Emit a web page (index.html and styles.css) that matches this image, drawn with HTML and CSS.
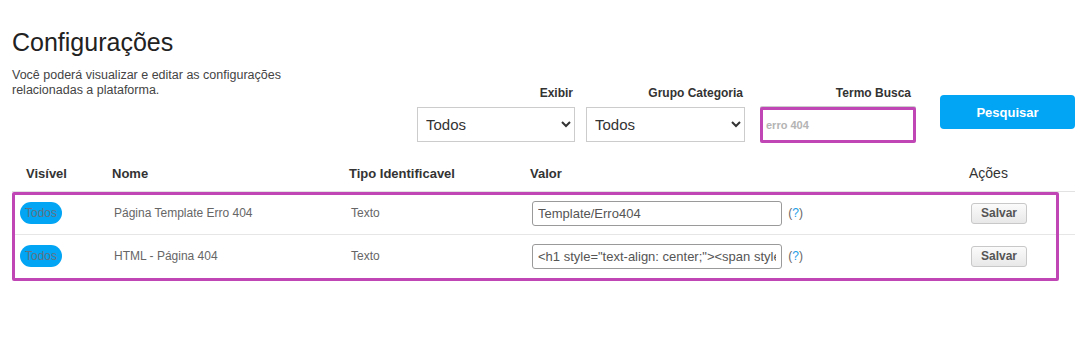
FILE: index.html
```html
<!DOCTYPE html>
<html lang="pt-BR">
<head>
    <meta charset="UTF-8">
    <link rel="stylesheet" href="styles.css">
</head>
<body>
    <div class="page">
        <h1>Configurações</h1>

        <div class="toolbar">
            <p class="desc">Você poderá visualizar e editar as configurações relacionadas a plataforma.</p>

            <div class="filters">
                <div class="field field-exibir">
                    <label>Exibir</label>
                    <select>
                        <option>Todos</option>
                    </select>
                </div>
                <div class="field field-grupo">
                    <label>Grupo Categoria</label>
                    <select>
                        <option>Todos</option>
                    </select>
                </div>
                <div class="field field-termo">
                    <label>Termo Busca</label>
                    <input type="text" class="search" value="erro 404">
                </div>
                <button type="button" class="btn-search">Pesquisar</button>
            </div>
        </div>

        <div class="grid">
            <table>
                <colgroup>
                    <col class="c-vis">
                    <col class="c-nome">
                    <col class="c-tipo">
                    <col class="c-valor">
                    <col class="c-acoes">
                </colgroup>
                <thead>
                    <tr>
                        <th class="th-vis">Visível</th>
                        <th>Nome</th>
                        <th>Tipo Identificavel</th>
                        <th>Valor</th>
                        <th class="th-acoes">Ações</th>
                    </tr>
                </thead>
                <tbody>
                    <tr>
                        <td><span class="badge">Todos</span></td>
                        <td>Página Template Erro 404</td>
                        <td>Texto</td>
                        <td>
                            <input type="text" class="value" value="Template/Erro404">
                            <span class="help">(<b>?</b>)</span>
                        </td>
                        <td><button type="button" class="btn-save">Salvar</button></td>
                    </tr>
                    <tr>
                        <td><span class="badge">Todos</span></td>
                        <td>HTML - Página 404</td>
                        <td>Texto</td>
                        <td>
                            <input type="text" class="value" value='<h1 style="text-align: center;"><span style="color: #333;">Página não encontrada</span></h1>'>
                            <span class="help">(<b>?</b>)</span>
                        </td>
                        <td><button type="button" class="btn-save">Salvar</button></td>
                    </tr>
                </tbody>
            </table>

            <!-- marcação em destaque sobre as linhas -->
            <div class="highlight"></div>
        </div>
    </div>
</body>
</html>
```

FILE: styles.css
```css
body {
    margin: 0;
    font-family: "Liberation Sans", Arial, sans-serif;
    background: #fff;
    color: #333;
}

.page {
    padding: 28px 10px 60px 12px;
}

h1 {
    margin: 0;
    font-size: 25px;
    line-height: 28px;
    font-weight: normal;
    color: #222;
}

.toolbar {
    display: flex;
    justify-content: space-between;
    align-items: flex-start;
    margin-top: 12px;
}

.desc {
    width: 290px;
    margin: 0;
    font-size: 12.5px;
    line-height: 15px;
    color: #444;
}

.filters {
    display: flex;
    align-items: flex-start;
    margin-top: 18px;
}

.field {
    display: flex;
    flex-direction: column;
}

.field label {
    text-align: right;
    padding-right: 2px;
    margin-bottom: 7px;
    font-size: 12px;
    line-height: 14px;
    font-weight: bold;
    color: #333;
}

.field-exibir {
    width: 158px;
}

.field-grupo {
    width: 159px;
    margin-left: 11px;
}

.field-termo {
    width: 156px;
    margin-left: 15px;
}

.field-termo label {
    padding-right: 5px;
}

select {
    height: 35px;
    width: 100%;
    border: 1px solid #ccc;
    border-radius: 0;
    background-color: #fff;
    padding: 0 4px;
    font-family: "Liberation Sans", Arial, sans-serif;
    font-size: 15px;
    color: #333;
}

.search {
    box-sizing: border-box;
    width: 156px;
    height: 36px;
    border: 3px solid #c046b6;
    border-radius: 2px;
    box-shadow: 0 -1px 0 #ccc;
    padding: 0 3px;
    font-family: "Liberation Sans", Arial, sans-serif;
    font-size: 11px;
    font-weight: bold;
    color: #b4b4b4;
    outline: none;
}

.btn-search {
    width: 135px;
    height: 34px;
    margin-top: 9px;
    margin-left: 24px;
    border: none;
    border-radius: 4px;
    background: #02a4f4;
    color: #fff;
    font-family: "Liberation Sans", Arial, sans-serif;
    font-size: 13px;
    font-weight: bold;
}

.grid {
    position: relative;
    margin-top: 12px;
}

table {
    width: 100%;
    table-layout: fixed;
    border-collapse: collapse;
}

.c-vis { width: 94px; }
.c-nome { width: 237px; }
.c-tipo { width: 181px; }
.c-valor { width: 439px; }
.c-acoes { width: 112px; }

th {
    height: 36px;
    padding: 0 0 0 6px;
    text-align: left;
    vertical-align: middle;
    font-size: 13px;
    font-weight: bold;
    color: #333;
    border-bottom: 1px solid #e2e2e2;
}

th.th-vis {
    padding-left: 14px;
}

th.th-acoes {
    font-weight: normal;
    font-size: 14px;
}

td {
    height: 42px;
    padding: 0 0 0 8px;
    vertical-align: middle;
    font-size: 12px;
    color: #666;
    white-space: nowrap;
}

tbody tr:first-child td {
    border-bottom: 1px solid #e6e6e6;
}

.badge {
    display: inline-block;
    height: 22px;
    line-height: 22px;
    padding: 0 5px;
    border-radius: 11px;
    background: #02a4f4;
    color: #5f7384;
    font-size: 12px;
    vertical-align: middle;
}

.value {
    box-sizing: border-box;
    width: 250px;
    height: 25px;
    border: 1px solid #9a9a9a;
    border-radius: 3px;
    padding: 0 5px;
    font-family: "Liberation Sans", Arial, sans-serif;
    font-size: 13px;
    color: #555;
    vertical-align: middle;
}

.help {
    margin-left: 3px;
    font-size: 12px;
    color: #666;
    vertical-align: middle;
}

.help b {
    font-weight: normal;
    color: #1e9de6;
}

.btn-save {
    width: 56px;
    height: 21px;
    padding: 0;
    border: 1px solid #c8c8c8;
    border-radius: 3px;
    background: linear-gradient(#fbfbfb, #e8e8e8);
    font-family: "Liberation Sans", Arial, sans-serif;
    font-size: 12px;
    font-weight: bold;
    color: #555;
    vertical-align: middle;
}

.highlight {
    position: absolute;
    left: 0;
    top: 37px;
    width: 1047px;
    height: 89px;
    box-sizing: border-box;
    border: 3px solid #c046b6;
    border-radius: 2px;
    pointer-events: none;
}
```
